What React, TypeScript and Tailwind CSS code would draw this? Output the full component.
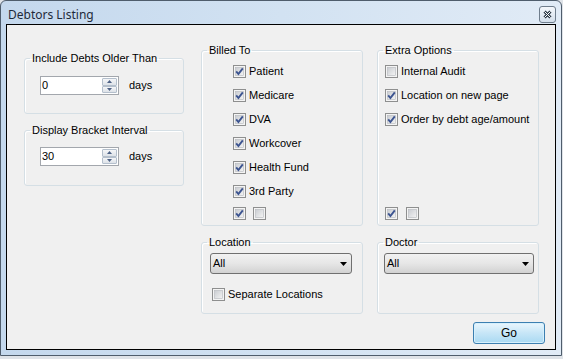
import React from 'react'

const CheckBox = ({ on }: { on?: boolean }) => (
  <svg width="13" height="13" viewBox="0 0 13 13" className="shrink-0">
    <defs>
      <linearGradient id="cbin" x1="0" y1="0" x2="1" y2="1">
        <stop offset="0" stopColor="#c9ccd1" />
        <stop offset="1" stopColor="#f4f4f4" />
      </linearGradient>
    </defs>
    <rect x="0.5" y="0.5" width="12" height="12" fill="#f4f4f4" stroke="#8e8f8f" />
    <rect x="2.5" y="2.5" width="8" height="8" fill="url(#cbin)" stroke="#b4b8bd" strokeWidth="0.6" />
    {on && <path d="M3.2 6.4 L5.4 9 L9.8 3.4" fill="none" stroke="#3c5490" strokeWidth="1.9" />}
  </svg>
)

const CheckRow = ({ label, on, className }: { label: string; on?: boolean; className?: string }) => (
  <div className={`flex items-center h-[24px] ${className ?? ''}`}>
    <CheckBox on={on} />
    <span className="ml-[3px]">{label}</span>
  </div>
)

const Spinner = ({ value }: { value: string }) => (
  <div className="flex items-center">
    <div className="flex w-[79px] h-[19px] border border-[#a3a7ad] bg-white">
      <span className="flex-1 pl-[1px] leading-[17px]">{value}</span>
      <div className="flex flex-col w-[15px] mr-[1px] my-[1px] gap-[0px]">
        <div className="flex-1 flex items-center justify-center border border-[#b4bfcc] rounded-[1px] bg-gradient-to-b from-[#f5f6f8] to-[#dde2e8]">
          <svg width="5" height="3" viewBox="0 0 5 3"><path d="M0 3 L2.5 0 L5 3 Z" fill="#4d6185" /></svg>
        </div>
        <div className="flex-1 flex items-center justify-center border border-[#b4bfcc] rounded-[1px] bg-gradient-to-b from-[#f5f6f8] to-[#dde2e8]">
          <svg width="5" height="3" viewBox="0 0 5 3"><path d="M0 0 L2.5 3 L5 0 Z" fill="#4d6185" /></svg>
        </div>
      </div>
    </div>
    <span className="ml-[10px]">days</span>
  </div>
)

const Combo = ({ className }: { className: string }) => (
  <div className={`flex items-center h-[21px] border border-[#707070] rounded-[3px] bg-gradient-to-b from-[#f2f2f2] via-[#e6e6e6] to-[#d2d2d2] ${className}`}>
    <span className="flex-1 pl-[2px]">All</span>
    <svg width="7" height="4" viewBox="0 0 7 4" className="mr-[4px]"><path d="M0 0 L7 0 L3.5 4 Z" fill="#000" /></svg>
  </div>
)

const Group = ({ title, className, children }: { title: string; className?: string; children?: React.ReactNode }) => (
  <fieldset className={`border border-[#d5dfe5] rounded-[3px] shadow-[inset_1px_1px_0_#fff] ${className ?? ''}`}>
    <legend className="ml-[5px] px-[2px] leading-[13px]">{title}</legend>
    {children}
  </fieldset>
)

const App = () => {
  return (
    <div className="w-[563px] h-[359px] bg-[#dfe3e8] overflow-hidden font-['Liberation_Sans',Arial,sans-serif] text-[11px] leading-[13px] text-black">
      <div className="w-[562px] h-[356px] flex flex-col border border-[#4f5d6c] rounded-t-[6px] bg-gradient-to-r from-[#c4d8ed] via-[#d2e2f2] to-[#e1ebf6]">
        <div className="h-[23px] shrink-0 flex items-center justify-between pl-[7px] pr-[5px] pt-[3px]">
          <span className="font-['Noto_Sans',sans-serif] text-[12px] text-[#1e2a3a]">Debtors Listing</span>
          <div className="w-[17px] h-[17px] flex items-center justify-center border border-[#6f7d8c] rounded-[3px] bg-gradient-to-b from-[#f4f7fb] to-[#d4dfeb]">
            <svg width="9" height="9" viewBox="0 0 9 9">
              <path d="M1.5 1.5 L7.5 7.5 M7.5 1.5 L1.5 7.5" stroke="#2f3b48" strokeWidth="3" />
              <path d="M1.5 1.5 L7.5 7.5 M7.5 1.5 L1.5 7.5" stroke="#ffffff" strokeWidth="1" />
            </svg>
          </div>
        </div>

        <div className="flex-1 flex flex-col mx-[5px] mb-[5px] border border-black bg-[#f0f0f0]">
          <div className="flex items-start">
            <div className="flex flex-col mt-[27px] ml-[17px] w-[160px]">
              <Group title="Include Debts Older Than" className="h-[62px]">
                <div className="mt-[11px] ml-[15px]"><Spinner value="0" /></div>
              </Group>
              <Group title="Display Bracket Interval" className="h-[62px] mt-[10px]">
                <div className="mt-[10px] ml-[15px]"><Spinner value="30" /></div>
              </Group>
            </div>

            <div className="grid grid-cols-[162px_162px] gap-x-[14px] gap-y-[10px] ml-[17px] mt-[19px]">
              <Group title="Billed To" className="h-[182px] flex flex-col pb-[3px]">
                <div className="flex flex-col ml-[31px] mt-[2px]">
                  <CheckRow label="Patient" on />
                  <CheckRow label="Medicare" on />
                  <CheckRow label="DVA" on />
                  <CheckRow label="Workcover" on />
                  <CheckRow label="Health Fund" on />
                  <CheckRow label="3rd Party" on />
                </div>
                <div className="flex items-center gap-[7px] h-[18px] ml-[31px] mt-auto">
                  <CheckBox on />
                  <CheckBox />
                </div>
              </Group>

              <Group title="Extra Options" className="h-[182px] flex flex-col pb-[3px]">
                <div className="flex flex-col ml-[7px] mt-[2px]">
                  <CheckRow label="Internal Audit" />
                  <CheckRow label="Location on new page" on />
                  <CheckRow label="Order by debt age/amount" on />
                </div>
                <div className="flex items-center gap-[8px] h-[18px] ml-[7px] mt-auto">
                  <CheckBox on />
                  <CheckBox />
                </div>
              </Group>

              <Group title="Location" className="h-[78px]">
                <Combo className="mt-[4px] ml-[8px] w-[142px]" />
                <div className="flex items-center h-[17px] mt-[12px] ml-[10px]">
                  <CheckBox />
                  <span className="ml-[3px]">Separate Locations</span>
                </div>
              </Group>

              <Group title="Doctor" className="h-[78px]">
                <Combo className="mt-[4px] ml-[6px] w-[150px]" />
              </Group>
            </div>
          </div>

          <div className="flex justify-end mt-[8px] mr-[10px]">
            <button className="w-[72px] h-[22px] border border-[#3c7fb1] rounded-[3px] bg-gradient-to-b from-[#eaf6fd] via-[#c7e6f7] to-[#a9d9f2] shadow-[inset_0_0_0_1px_#d6f0fc] text-[12px] text-black">
              Go
            </button>
          </div>
        </div>
      </div>
    </div>
  )
}

export default App
